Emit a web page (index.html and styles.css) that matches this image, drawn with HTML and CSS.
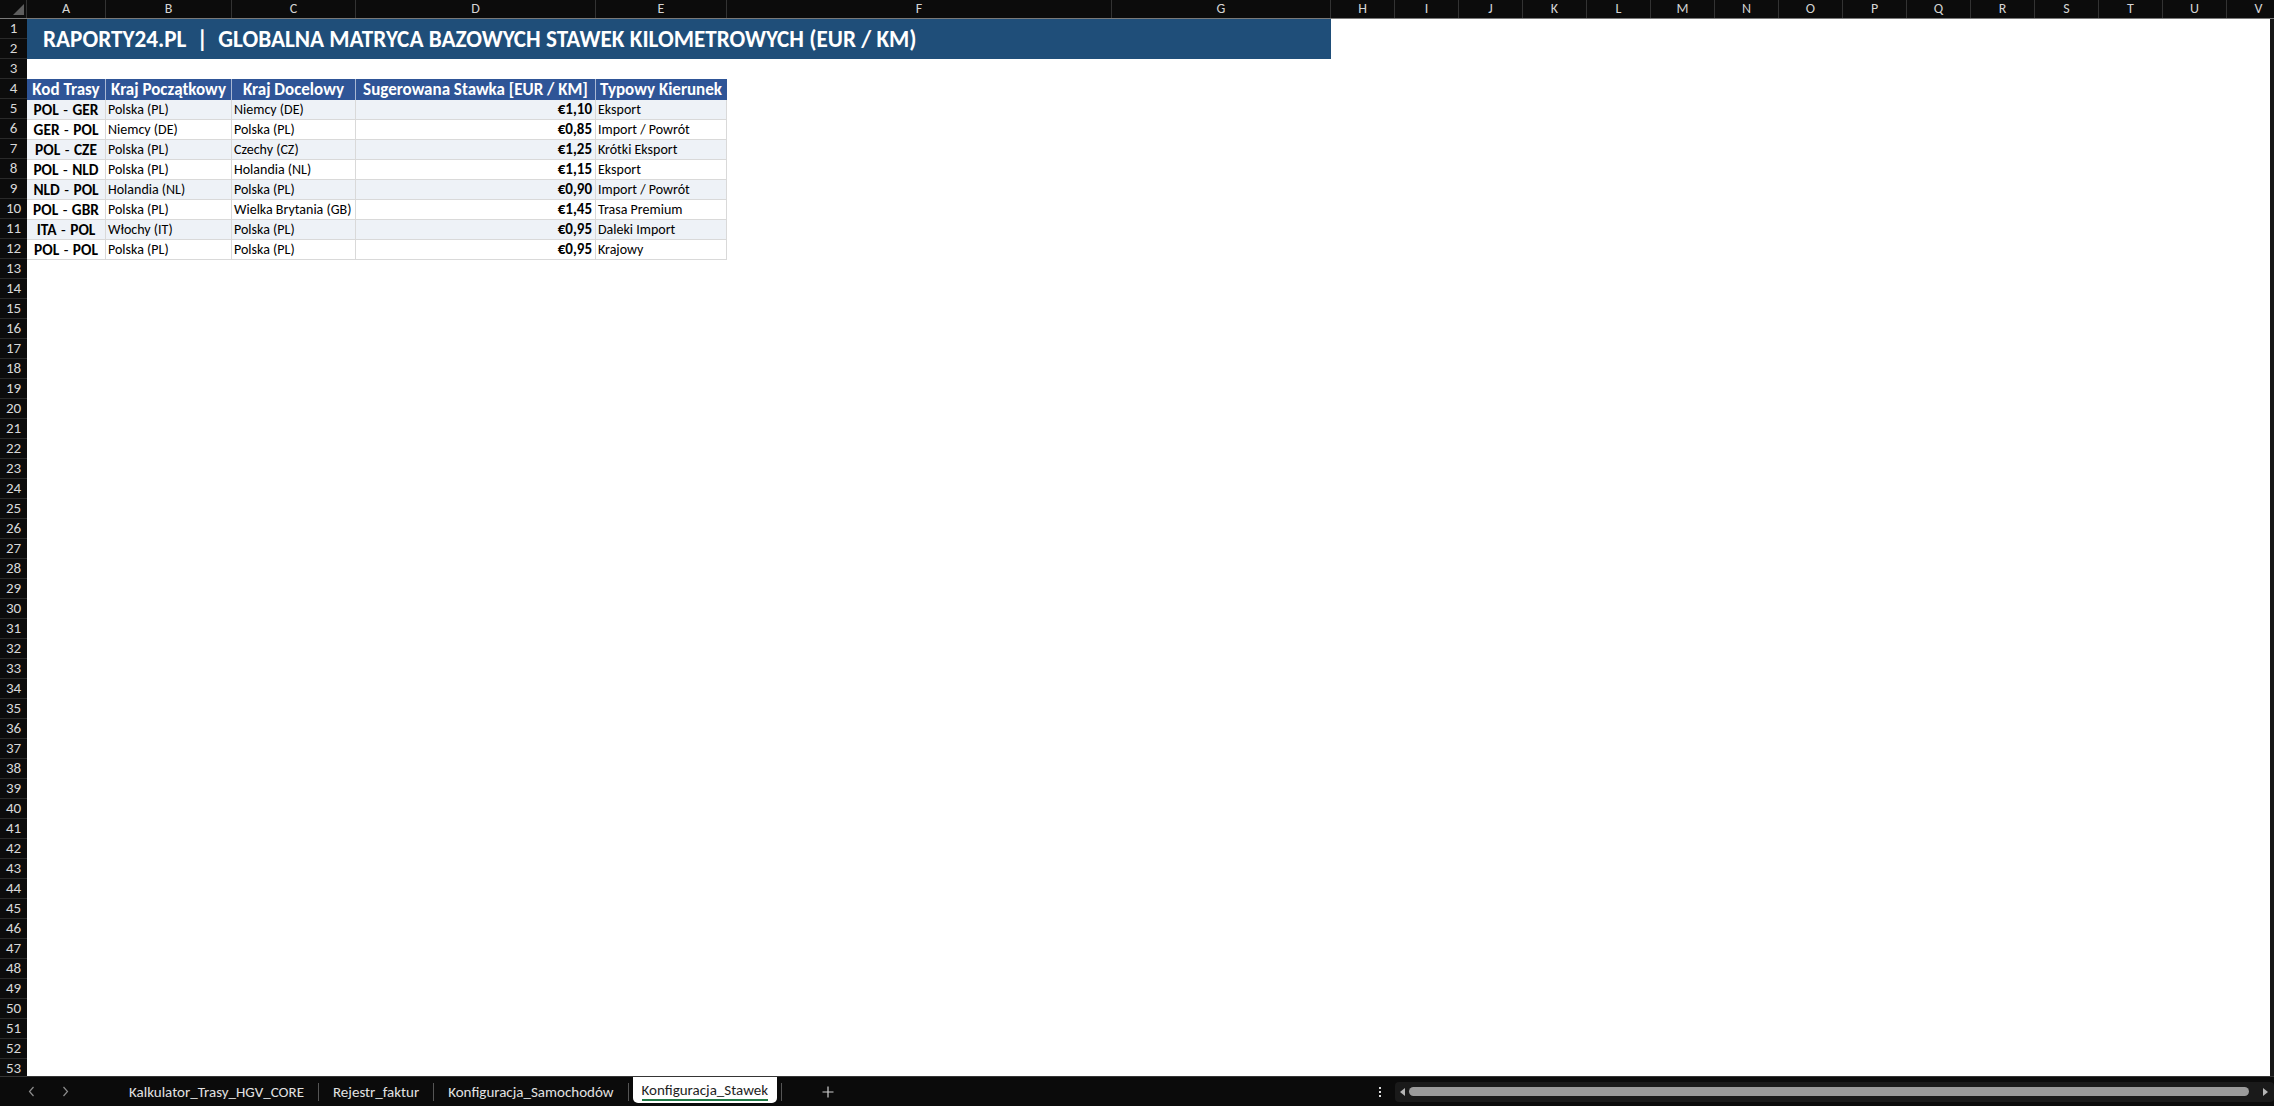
FILE: index.html
```html
<!DOCTYPE html>
<html lang="pl">
<head>
  <meta charset="UTF-8">
  <meta name="viewport" content="width=device-width, initial-scale=1.0">
  <title>Konfiguracja_Stawek</title>
  <link rel="stylesheet" href="styles.css">
</head>
<body>
  <div class="workbook">

    <div class="col-heads">
      <div class="corner">
        <svg width="11" height="11" viewBox="0 0 11 11"><polygon points="11,0 11,11 0,11" fill="#5e5e5e"/></svg>
      </div>
      <div class="ch">A</div>
      <div class="ch">B</div>
      <div class="ch">C</div>
      <div class="ch">D</div>
      <div class="ch">E</div>
      <div class="ch">F</div>
      <div class="ch">G</div>
      <div class="ch">H</div>
      <div class="ch">I</div>
      <div class="ch">J</div>
      <div class="ch">K</div>
      <div class="ch">L</div>
      <div class="ch">M</div>
      <div class="ch">N</div>
      <div class="ch">O</div>
      <div class="ch">P</div>
      <div class="ch">Q</div>
      <div class="ch">R</div>
      <div class="ch">S</div>
      <div class="ch">T</div>
      <div class="ch">U</div>
      <div class="ch">V</div>
    </div>

    <div class="sheet-wrap">
      <div class="row-heads">
        <div class="rh">1</div><div class="rh">2</div><div class="rh">3</div><div class="rh">4</div>
        <div class="rh">5</div><div class="rh">6</div><div class="rh">7</div><div class="rh">8</div>
        <div class="rh">9</div><div class="rh">10</div><div class="rh">11</div><div class="rh">12</div>
        <div class="rh">13</div><div class="rh">14</div><div class="rh">15</div><div class="rh">16</div>
        <div class="rh">17</div><div class="rh">18</div><div class="rh">19</div><div class="rh">20</div>
        <div class="rh">21</div><div class="rh">22</div><div class="rh">23</div><div class="rh">24</div>
        <div class="rh">25</div><div class="rh">26</div><div class="rh">27</div><div class="rh">28</div>
        <div class="rh">29</div><div class="rh">30</div><div class="rh">31</div><div class="rh">32</div>
        <div class="rh">33</div><div class="rh">34</div><div class="rh">35</div><div class="rh">36</div>
        <div class="rh">37</div><div class="rh">38</div><div class="rh">39</div><div class="rh">40</div>
        <div class="rh">41</div><div class="rh">42</div><div class="rh">43</div><div class="rh">44</div>
        <div class="rh">45</div><div class="rh">46</div><div class="rh">47</div><div class="rh">48</div>
        <div class="rh">49</div><div class="rh">50</div><div class="rh">51</div><div class="rh">52</div>
        <div class="rh">53</div>
      </div>

      <div class="sheet">
        <div class="title">RAPORTY24.PL  |  GLOBALNA MATRYCA BAZOWYCH STAWEK KILOMETROWYCH (EUR / KM)</div>
        <div class="blank-row"></div>

        <div class="matrix">
          <div class="tr head">
            <div class="th">Kod Trasy</div>
            <div class="th">Kraj Początkowy</div>
            <div class="th">Kraj Docelowy</div>
            <div class="th">Sugerowana Stawka [EUR / KM]</div>
            <div class="th">Typowy Kierunek</div>
          </div>
          <div class="tr alt">
            <div class="td code">POL <span class="dash">-</span> GER</div>
            <div class="td">Polska (PL)</div>
            <div class="td">Niemcy (DE)</div>
            <div class="td rate">€1,10</div>
            <div class="td">Eksport</div>
          </div>
          <div class="tr">
            <div class="td code">GER <span class="dash">-</span> POL</div>
            <div class="td">Niemcy (DE)</div>
            <div class="td">Polska (PL)</div>
            <div class="td rate">€0,85</div>
            <div class="td">Import / Powrót</div>
          </div>
          <div class="tr alt">
            <div class="td code">POL <span class="dash">-</span> CZE</div>
            <div class="td">Polska (PL)</div>
            <div class="td">Czechy (CZ)</div>
            <div class="td rate">€1,25</div>
            <div class="td">Krótki Eksport</div>
          </div>
          <div class="tr">
            <div class="td code">POL <span class="dash">-</span> NLD</div>
            <div class="td">Polska (PL)</div>
            <div class="td">Holandia (NL)</div>
            <div class="td rate">€1,15</div>
            <div class="td">Eksport</div>
          </div>
          <div class="tr alt">
            <div class="td code">NLD <span class="dash">-</span> POL</div>
            <div class="td">Holandia (NL)</div>
            <div class="td">Polska (PL)</div>
            <div class="td rate">€0,90</div>
            <div class="td">Import / Powrót</div>
          </div>
          <div class="tr">
            <div class="td code">POL <span class="dash">-</span> GBR</div>
            <div class="td">Polska (PL)</div>
            <div class="td">Wielka Brytania (GB)</div>
            <div class="td rate">€1,45</div>
            <div class="td">Trasa Premium</div>
          </div>
          <div class="tr alt">
            <div class="td code">ITA <span class="dash">-</span> POL</div>
            <div class="td">Włochy (IT)</div>
            <div class="td">Polska (PL)</div>
            <div class="td rate">€0,95</div>
            <div class="td">Daleki Import</div>
          </div>
          <div class="tr">
            <div class="td code">POL <span class="dash">-</span> POL</div>
            <div class="td">Polska (PL)</div>
            <div class="td">Polska (PL)</div>
            <div class="td rate">€0,95</div>
            <div class="td">Krajowy</div>
          </div>
        </div>
      </div>

      <div class="vscroll"></div>
    </div>

    <div class="tabs">
      <svg class="nav" width="7" height="11" viewBox="0 0 7 11"><polyline points="5.5,1 1.5,5.5 5.5,10" fill="none" stroke="#8c8c8c" stroke-width="1.2"/></svg>
      <svg class="nav" width="7" height="11" viewBox="0 0 7 11"><polyline points="1.5,1 5.5,5.5 1.5,10" fill="none" stroke="#8c8c8c" stroke-width="1.2"/></svg>

      <div class="tab-list">
        <div class="tab">Kalkulator_Trasy_HGV_CORE</div>
        <div class="tab-sep"></div>
        <div class="tab">Rejestr_faktur</div>
        <div class="tab-sep"></div>
        <div class="tab">Konfiguracja_Samochodów</div>
        <div class="tab-sep"></div>
        <div class="tab active"><span>Konfiguracja_Stawek</span></div>
        <div class="tab-sep"></div>
        <svg class="add" width="12" height="12" viewBox="0 0 12 12"><path d="M6 0.5V11.5M0.5 6H11.5" stroke="#cfcfcf" stroke-width="1.2"/></svg>
      </div>

      <div class="hscroll">
        <div class="dots"><i></i><i></i><i></i></div>
        <div class="track">
          <svg width="6" height="8" viewBox="0 0 6 8"><polygon points="5,0 5,8 0,4" fill="#b5b5b5"/></svg>
          <div class="thumb"></div>
          <svg width="6" height="8" viewBox="0 0 6 8"><polygon points="0,0 0,8 5,4" fill="#b5b5b5"/></svg>
        </div>
      </div>
    </div>

  </div>
</body>
</html>
```

FILE: styles.css
```css
body {
  margin: 0;
  background: #0b0b0b;
  overflow: hidden;
  font-family: "Carlito", "Liberation Sans Narrow", "Lato", sans-serif;
}

.workbook {
  width: 2274px;
  height: 1106px;
  display: flex;
  flex-direction: column;
  overflow: hidden;
}

/* column letters */
.col-heads {
  flex: none;
  height: 19px;
  box-sizing: border-box;
  display: grid;
  grid-template-columns: 27px 79px 126px 124px 240px 131px 385px 219px repeat(15, 64px);
  background: #0c0c0c;
  border-bottom: 1px solid #7a7a7a;
  overflow: hidden;
}

.corner {
  display: flex;
  justify-content: flex-end;
  align-items: flex-end;
  padding: 0 2px 3px 0;
  border-right: 1px solid #333;
}

.ch {
  border-right: 1px solid #333;
  color: #d4d4d4;
  font-size: 14px;
  line-height: 18px;
  text-align: center;
}

/* grid area */
.sheet-wrap {
  flex: none;
  height: 1057px;
  display: flex;
  overflow: hidden;
}

.row-heads {
  flex: none;
  width: 27px;
  background: #0c0c0c;
}

.rh {
  height: 20px;
  box-sizing: border-box;
  border-bottom: 1px solid #2a2a2a;
  color: #d8d8d8;
  font-size: 15px;
  line-height: 19px;
  text-align: center;
}

.sheet {
  flex: 1;
  background: #fff;
  overflow: hidden;
}

.vscroll {
  flex: none;
  width: 4px;
  background: #181818;
}

.title {
  width: 1304px;
  height: 40px;
  box-sizing: border-box;
  padding-left: 16px;
  background: #1f4e79;
  color: #fff;
  font-weight: bold;
  font-size: 23.2px;
  line-height: 40px;
  white-space: pre;
}

.blank-row {
  height: 20px;
}

.matrix {
  display: grid;
  grid-template-columns: 79px 126px 124px 240px 131px;
  grid-template-rows: 21px;
  grid-auto-rows: 20px;
  width: 700px;
}

.tr {
  display: contents;
}

.th {
  background: #2f5597;
  color: #fff;
  font-weight: bold;
  font-size: 17px;
  line-height: 21px;
  text-align: center;
  white-space: nowrap;
  overflow: hidden;
  border-right: 1px solid #a8b7d3;
}

.th:last-child {
  border-right-color: #2f5597;
}

.td {
  box-sizing: border-box;
  padding: 0 2px;
  border-right: 1px solid #d9d9d9;
  border-bottom: 1px solid #d9d9d9;
  color: #000;
  font-size: 14px;
  line-height: 19px;
  white-space: nowrap;
  overflow: hidden;
}

.alt .td {
  background: #eef2f7;
}

.code {
  text-align: center;
  font-weight: bold;
  font-size: 15.4px;
}

.dash {
  font-weight: normal;
  padding: 0 1px;
}

.rate {
  text-align: right;
  padding-right: 3px;
  font-weight: bold;
  font-size: 15px;
}

/* sheet tabs */
.tabs {
  flex: none;
  height: 30px;
  box-sizing: border-box;
  display: flex;
  align-items: center;
  padding-left: 28px;
  background: #0b0b0b;
  border-top: 1px solid #353535;
}

.nav {
  margin-right: 27px;
}

.tab-list {
  display: flex;
  align-items: center;
  height: 100%;
  margin-left: 19px;
}

.tab {
  padding: 0 14px;
  color: #e2e2e2;
  font-size: 15px;
}

.tab-sep {
  width: 1px;
  height: 18px;
  background: #555;
}

.tab.active {
  align-self: flex-start;
  height: 26px;
  margin: 0 4px;
  padding: 0 9px;
  background: #fff;
  color: #1e1e1e;
  border-radius: 0 0 5px 5px;
  display: flex;
  align-items: center;
}

.tab.active span {
  padding-top: 2px;
  border-bottom: 2px solid #1f7a45;
}

.add {
  margin-left: 40px;
}

.hscroll {
  margin-left: auto;
  display: flex;
  align-items: center;
}

.dots {
  display: flex;
  flex-direction: column;
  gap: 2px;
  margin-right: 14px;
}

.dots i {
  width: 2px;
  height: 2px;
  background: #dcdcdc;
}

.track {
  width: 879px;
  height: 20px;
  box-sizing: border-box;
  display: flex;
  align-items: center;
  gap: 3px;
  padding: 0 5px;
  background: #1a1a1a;
  border-radius: 4px;
}

.thumb {
  flex: 1;
  height: 9px;
  margin-right: 11px;
  background: #9b9b9b;
  border-radius: 5px;
}
```
